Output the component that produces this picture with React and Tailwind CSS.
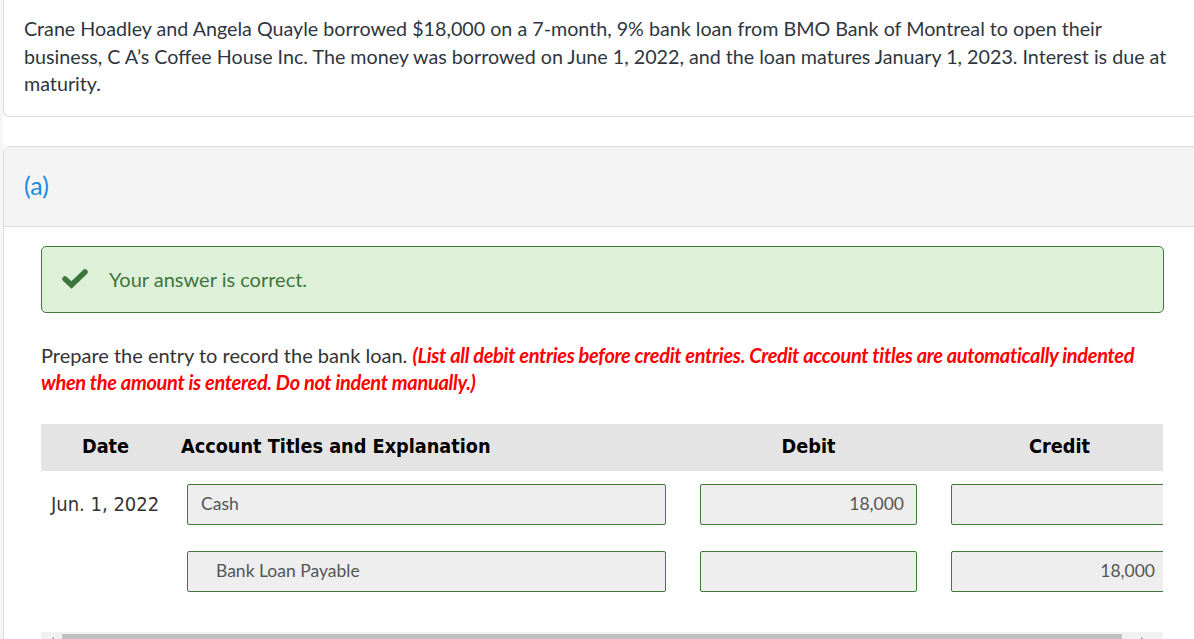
import React from 'react';

const rows = [
  { date: 'Jun. 1, 2022', account: 'Cash', indent: false, debit: '18,000', credit: '' },
  { date: '', account: 'Bank Loan Payable', indent: true, debit: '', credit: '18,000' },
];

function Field({ value, align = 'left', indent = false }) {
  return (
    <div
      className={`h-[41px] bg-[#eeeeee] border border-[#3f7a3a] rounded-[2px] flex items-center text-[17.5px] text-[#555] ${
        align === 'right' ? 'justify-end pr-[12px]' : indent ? 'pl-[28px]' : 'pl-[13px]'
      }`}
    >
      {value}
    </div>
  );
}

export default function App() {
  return (
    <div className="min-h-screen h-[639px] overflow-hidden bg-white font-['Lato','Noto_Sans',sans-serif] text-[#333]">
      <div className="h-full border-l-[3px] border-[#f6f6f6]">
        {/* problem statement */}
        <div className="bg-white border-b border-l border-[#dcdcdc] rounded-bl-md pl-[20px] pr-4 pt-[15px] pb-[18px] text-[19.7px] leading-[27.5px] text-[#2f3640] whitespace-nowrap">
          Crane Hoadley and Angela Quayle borrowed $18,000 on a 7-month, 9% bank loan from BMO Bank of Montreal to open their
          <br />
          business, C A’s Coffee House Inc. The money was borrowed on June 1, 2022, and the loan matures January 1, 2023. Interest is due at
          <br />
          maturity.
        </div>

        {/* part (a) */}
        <div className="mt-[29px] border-t border-l border-[#dcdcdc] rounded-tl-md">
          <div className="h-[80px] bg-[#f4f4f4] border-b border-[#dcdcdc] flex items-center pl-[20px] text-[25px] text-[#1a8be0]">
            (a)
          </div>

          <div className="pl-[37px] pr-[30px]">
            <div className="mt-[19px] h-[67px] w-[1123px] bg-[#dff0d8] border border-[#3f7a3a] rounded-[5px] flex items-center">
              <svg width="26" height="20" viewBox="0 0 26 20" className="ml-[20px]">
                <path d="M3 10 L9.5 16 L23 3" fill="none" stroke="#3c763d" strokeWidth="5.5" strokeLinecap="round" strokeLinejoin="miter" />
              </svg>
              <span className="ml-[21px] text-[20px] text-[#3c763d]">Your answer is correct.</span>
            </div>

            <p className="mt-[29px] text-[20px] leading-[27px] whitespace-nowrap">
              Prepare the entry to record the bank loan.{' '}
              <span className="text-[#ff0000] font-bold italic tracking-[-0.32px]">
                (List all debit entries before credit entries. Credit account titles are automatically indented
                <br />
                when the amount is entered. Do not indent manually.)
              </span>
            </p>

            <div className="mt-[28px] w-[1122px] overflow-hidden">
              <div className="w-[1144px]">
                <div className="h-[47px] bg-[#e4e4e4] flex items-center font-['DejaVu_Sans_Condensed',sans-serif] font-bold text-[19.7px] text-black">
                  <div className="w-[129px] text-center">Date</div>
                  <div className="w-[513px] pl-[11px]">Account Titles and Explanation</div>
                  <div className="w-[251px] text-center">Debit</div>
                  <div className="w-[251px] text-center">Credit</div>
                </div>

                <div className="pt-[13px] flex flex-col gap-[26px]">
                  {rows.map((r, i) => (
                    <div key={i} className="flex items-center">
                      <div className="w-[129px] pl-[10px] font-['DejaVu_Sans_Condensed',sans-serif] text-[20px] text-[#333]">
                        {r.date}
                      </div>
                      <div className="w-[513px] px-[17px]">
                        <Field value={r.account} indent={r.indent} />
                      </div>
                      <div className="w-[251px] px-[17px]">
                        <Field value={r.debit} align="right" />
                      </div>
                      <div className="w-[251px] px-[17px]">
                        <Field value={r.credit} align="right" />
                      </div>
                    </div>
                  ))}
                </div>
              </div>

              {/* horizontal scrollbar */}
              <div className="mt-[40px] h-[17px] bg-[#f1f1f1] flex items-start">
                <div className="w-[21px] h-full flex justify-center pt-[5px]">
                  <svg width="6" height="8" viewBox="0 0 6 8"><path d="M5 0 L1 4 L5 8 Z" fill="#808080" /></svg>
                </div>
                <div className="mt-[2px] h-[12px] w-[1060px] bg-[#c1c1c1]" />
                <div className="flex-1 flex justify-center pt-[5px]">
                  <svg width="6" height="8" viewBox="0 0 6 8"><path d="M1 0 L5 4 L1 8 Z" fill="#808080" /></svg>
                </div>
              </div>
            </div>
          </div>
        </div>
      </div>
    </div>
  );
}
